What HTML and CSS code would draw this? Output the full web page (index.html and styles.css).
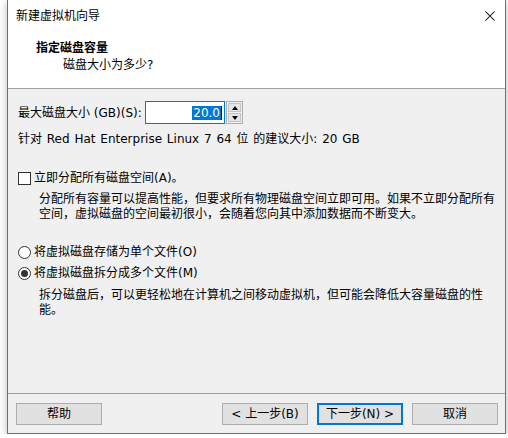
FILE: index.html
```html
<!DOCTYPE html>
<html lang="zh-CN">
<head>
<meta charset="utf-8">
<title>新建虚拟机向导</title>
<link rel="stylesheet" href="styles.css">
</head>
<body>
<div class="window">
  <div class="top">
    <div class="titlebar">
      <span class="title">新建虚拟机向导</span>
      <svg class="close" width="10" height="10" viewBox="0 0 10 10"><path d="M0.5 0.5 L9.5 9.5 M9.5 0.5 L0.5 9.5" stroke="#000" stroke-width="1.05" fill="none"/></svg>
    </div>
    <div class="header">
      <div class="h-title">指定磁盘容量</div>
      <div class="h-sub">磁盘大小为多少?</div>
    </div>
  </div>
  <div class="body">
    <div class="size-row">
      <span class="size-label">最大磁盘大小 (GB)(S):</span>
      <div class="spin-input"><span class="sel">20.0</span><span class="caret"></span></div>
      <div class="spin-btns">
        <div class="spin-btn"><span class="tri-up"></span></div>
        <div class="spin-btn"><span class="tri-down"></span></div>
      </div>
    </div>
    <div class="recommend">针对 Red Hat Enterprise Linux 7 64 位 的建议大小: 20 GB</div>
    <div class="check-row">
      <span class="checkbox"></span>
      <span class="opt-label">立即分配所有磁盘空间(A)。</span>
    </div>
    <div class="desc desc-alloc">分配所有容量可以提高性能，但要求所有物理磁盘空间立即可用。如果不立即分配所有空间，虚拟磁盘的空间最初很小，会随着您向其中添加数据而不断变大。</div>
    <div class="radio-row radio-first">
      <span class="radio"></span>
      <span class="opt-label">将虚拟磁盘存储为单个文件(O)</span>
    </div>
    <div class="radio-row">
      <span class="radio checked"></span>
      <span class="opt-label">将虚拟磁盘拆分成多个文件(M)</span>
    </div>
    <div class="desc desc-split">拆分磁盘后，可以更轻松地在计算机之间移动虚拟机，但可能会降低大容量磁盘的性能。</div>
  </div>
  <div class="footer">
    <button class="btn">帮助</button>
    <div class="spacer"></div>
    <button class="btn">&lt; 上一步(B)</button>
    <button class="btn btn-default">下一步(N) &gt;</button>
    <button class="btn">取消</button>
  </div>
</div>
</body>
</html>
```

FILE: styles.css
```css
* { box-sizing: border-box; }
html, body {
  margin: 0;
  padding: 0;
  background: #ffffff;
}
body {
  font-family: "DejaVu Sans", "Noto Sans CJK SC", sans-serif;
  font-size: 12px;
  color: #000;
  padding-left: 7px;
}
.window {
  width: 499px;
  height: 434px;
  display: flex;
  flex-direction: column;
  border: 1px solid #6f6f6f;
  border-top: none;
  background: #f0f0f0;
  box-shadow: 0 2px 8px rgba(0, 0, 0, 0.28);
}
.top {
  background: #fff;
  height: 89px;
  border-bottom: 1px solid #a0a0a0;
}
.titlebar {
  height: 31px;
  display: flex;
  align-items: center;
  justify-content: space-between;
  padding: 0 10px 0 8px;
  line-height: 16px;
}
.title { padding-top: 1px; }
.close { display: block; margin-top: 1px; }
.header {
  padding: 9px 0 0 28px;
  line-height: 16px;
}
.h-title { font-weight: bold; }
.h-sub { padding-left: 27px; padding-top: 1px; }

.body {
  flex: 1;
  padding: 12px 8px 0 10px;
  line-height: 16px;
}
.size-row {
  display: flex;
  align-items: center;
  height: 23px;
}
.size-label { width: 127px; white-space: nowrap; }
.spin-input {
  width: 80px;
  height: 23px;
  border: 1px solid #0078d7;
  background: #fff;
  display: flex;
  align-items: center;
  justify-content: flex-end;
  padding-right: 2px;
}
.sel {
  background: #0078d7;
  color: #fff;
  line-height: 14px;
  height: 14px;
  padding: 0 1px;
  display: inline-block;
}
.caret {
  width: 1px;
  height: 14px;
  background: #000;
  display: inline-block;
}
.spin-btns {
  margin-left: 1px;
  width: 17px;
  height: 23px;
  display: flex;
  flex-direction: column;
  border: 1px solid #adadad;
  background: #f0f0f0;
  padding: 1px;
  gap: 1px;
}
.spin-btn {
  flex: 1;
  background: #e5e5e5;
  border: 1px solid #c5c5c5;
  display: flex;
  align-items: center;
  justify-content: center;
}
.tri-up, .tri-down {
  width: 0;
  height: 0;
  border-left: 3.5px solid transparent;
  border-right: 3.5px solid transparent;
}
.tri-up { border-bottom: 4px solid #000; }
.tri-down { border-top: 4px solid #000; }

.recommend {
  margin-top: 7px;
  word-spacing: 1px;
}
.check-row, .radio-row {
  display: flex;
  align-items: center;
  height: 16px;
}
.check-row { margin-top: 23px; }
.checkbox {
  width: 13px;
  height: 13px;
  border: 1px solid #333;
  background: #fff;
  margin-right: 3px;
}
.radio {
  width: 13px;
  height: 13px;
  border: 1px solid #333;
  border-radius: 50%;
  background: #fff;
  margin-right: 3px;
  display: flex;
  align-items: center;
  justify-content: center;
}
.radio.checked::after {
  content: "";
  width: 7px;
  height: 7px;
  border-radius: 50%;
  background: #333;
}
.desc {
  padding-left: 21px;
  line-height: 15px;
}
.desc-alloc { margin-top: 6px; }
.radio-first { margin-top: 22px; }
.radio-row + .radio-row { margin-top: 5px; }
.desc-split { margin-top: 7px; }

.footer {
  height: 40px;
  border-top: 1px solid #a0a0a0;
  display: flex;
  align-items: flex-start;
  padding: 9px 7px 0 8px;
  gap: 9px;
}
.spacer { flex: 1; }
.btn {
  width: 86px;
  height: 22px;
  background: #e1e1e1;
  border: 1px solid #adadad;
  font-family: inherit;
  font-size: 12px;
  color: #000;
  padding: 0;
  line-height: 16px;
}
.btn-default {
  border: 2px solid #0078d7;
}
```
